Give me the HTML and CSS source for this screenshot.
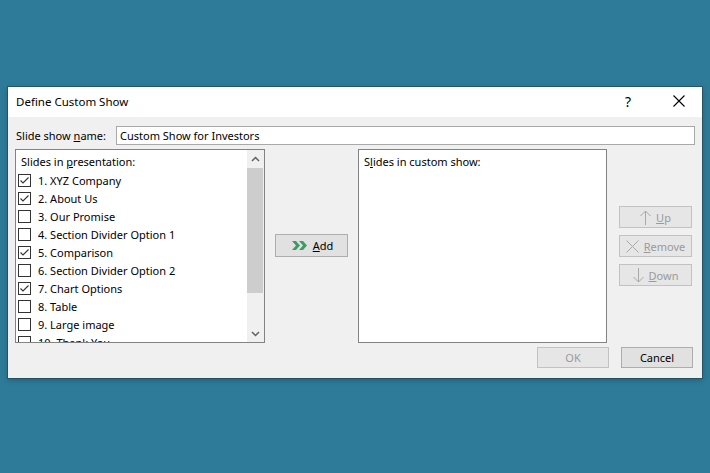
FILE: index.html
```html
<!DOCTYPE html>
<html>
<head>
<meta charset="utf-8">
<link rel="stylesheet" href="styles.css">
</head>
<body>
<div class="dialog">
  <div class="titlebar">
    <span class="title">Define Custom Show</span>
    <span class="help">?</span>
    <span class="close"><svg width="12" height="12" viewBox="0 0 12 12"><path d="M0.5 0.5 L11.5 11.5 M11.5 0.5 L0.5 11.5" stroke="#000" stroke-width="1.1" fill="none"/></svg></span>
  </div>
  <div class="body">
    <div class="name-row">
      <span class="name-label">Slide show <u>n</u>ame:</span>
      <div class="input">Custom Show for Investors</div>
    </div>
    <div class="main">
      <div class="listbox left">
        <div class="list">
          <div class="list-head">Slides in <u>p</u>resentation:</div>
          <div class="item"><span class="cb checked"><svg width="13" height="13" viewBox="0 0 13 13"><path d="M2.5 6.5 L5 9 L10.5 3.5" stroke="#333" stroke-width="1.1" fill="none"/></svg></span>1. XYZ Company</div>
          <div class="item"><span class="cb checked"><svg width="13" height="13" viewBox="0 0 13 13"><path d="M2.5 6.5 L5 9 L10.5 3.5" stroke="#333" stroke-width="1.1" fill="none"/></svg></span>2. About Us</div>
          <div class="item"><span class="cb"></span>3. Our Promise</div>
          <div class="item"><span class="cb"></span>4. Section Divider Option 1</div>
          <div class="item"><span class="cb checked"><svg width="13" height="13" viewBox="0 0 13 13"><path d="M2.5 6.5 L5 9 L10.5 3.5" stroke="#333" stroke-width="1.1" fill="none"/></svg></span>5. Comparison</div>
          <div class="item"><span class="cb"></span>6. Section Divider Option 2</div>
          <div class="item"><span class="cb checked"><svg width="13" height="13" viewBox="0 0 13 13"><path d="M2.5 6.5 L5 9 L10.5 3.5" stroke="#333" stroke-width="1.1" fill="none"/></svg></span>7. Chart Options</div>
          <div class="item"><span class="cb"></span>8. Table</div>
          <div class="item"><span class="cb"></span>9. Large image</div>
          <div class="item"><span class="cb"></span>10. Thank You</div>
        </div>
        <div class="scrollbar">
          <div class="sb-arrow"><svg width="9" height="6" viewBox="0 0 9 6"><path d="M1 5 L4.5 1.5 L8 5" stroke="#606060" stroke-width="1.5" fill="none"/></svg></div>
          <div class="sb-track"><div class="sb-thumb"></div></div>
          <div class="sb-arrow"><svg width="9" height="6" viewBox="0 0 9 6"><path d="M1 1 L4.5 4.5 L8 1" stroke="#606060" stroke-width="1.5" fill="none"/></svg></div>
        </div>
      </div>
      <div class="mid">
        <div class="btn add">
          <svg width="17" height="9" viewBox="0 0 17 9"><path d="M0 0 H4 L8 4.5 L4 9 H0 L4 4.5 Z" fill="#3f9b63"/><path d="M7 0 H11 L15 4.5 L11 9 H7 L11 4.5 Z" fill="#3f9b63"/></svg>
          <span><u>A</u>dd</span>
        </div>
      </div>
      <div class="listbox right">
        <div class="list-head">S<u>l</u>ides in custom show:</div>
      </div>
      <div class="side">
        <div class="btn disabled">
          <svg width="11" height="15" viewBox="0 0 11 15"><path d="M5.5 1 V15 M0.5 6 L5.5 1 L10.5 6" stroke="#a8a8a8" stroke-width="1" fill="none"/></svg>
          <span><u>U</u>p</span>
        </div>
        <div class="btn disabled">
          <svg width="13" height="13" viewBox="0 0 13 13"><path d="M0.5 0.5 L12.5 12.5 M12.5 0.5 L0.5 12.5" stroke="#a8a8a8" stroke-width="1" fill="none"/></svg>
          <span><u>R</u>emove</span>
        </div>
        <div class="btn disabled">
          <svg width="11" height="15" viewBox="0 0 11 15"><path d="M5.5 0 V14 M0.5 9 L5.5 14 L10.5 9" stroke="#a8a8a8" stroke-width="1" fill="none"/></svg>
          <span><u>D</u>own</span>
        </div>
      </div>
    </div>
    <div class="bottom">
      <div class="btn disabled ok">OK</div>
      <div class="btn cancel">Cancel</div>
    </div>
  </div>
</div>
</body>
</html>
```

FILE: styles.css
```css
html, body {
  margin: 0;
  padding: 0;
}
body {
  background: #2d7b99;
  width: 710px;
  height: 473px;
  padding: 87px 8px 0 8px;
  box-sizing: border-box;
  font-family: "Noto Sans", "Open Sans", sans-serif;
  font-size: 11px;
  color: #000;
}
.dialog {
  width: 694px;
  height: 291px;
  background: #f0f0f0;
  box-shadow: 0 0 0 1px rgba(40, 60, 70, 0.55), 0 2px 6px rgba(0, 0, 0, 0.25);
  display: flex;
  flex-direction: column;
}
.titlebar {
  height: 30px;
  background: #fff;
  display: flex;
  align-items: center;
  padding-left: 8px;
}
.title {
  flex: 1;
  font-size: 11.5px;
  line-height: 16px;
  margin-top: -1px;
}
.help {
  font-size: 14px;
  width: 12px;
  margin-right: 36px;
  margin-top: -2px;
}
.close {
  display: flex;
  margin-right: 17px;
  margin-top: -2px;
}
.body {
  flex: 1;
  padding: 9px 7px 10px 7px;
  display: flex;
  flex-direction: column;
}
.name-row {
  display: flex;
  height: 19px;
  align-items: center;
}
.name-label {
  width: 101px;
  padding-left: 1px;
  box-sizing: border-box;
}
.input {
  flex: 1;
  height: 19px;
  box-sizing: border-box;
  background: #fff;
  border: 1px solid #a9a9a9;
  padding-left: 3px;
  line-height: 17px;
}
.main {
  display: flex;
  margin-top: 4px;
  height: 194px;
}
.listbox {
  box-sizing: border-box;
  border: 1px solid #838383;
  background: #fff;
  overflow: hidden;
}
.listbox.left {
  width: 250px;
  display: flex;
}
.list {
  flex: 1;
  padding-top: 3px;
  overflow: hidden;
}
.list-head {
  height: 18px;
  line-height: 18px;
  padding-left: 5px;
}
.item {
  height: 18px;
  display: flex;
  align-items: center;
  padding-left: 2px;
}
.cb {
  width: 13px;
  height: 13px;
  box-sizing: border-box;
  border: 1px solid #333;
  margin-right: 7px;
  position: relative;
  flex: none;
}
.cb svg {
  position: absolute;
  left: -1px;
  top: -1px;
}
.scrollbar {
  width: 17px;
  background: #f0f0f0;
  display: flex;
  flex-direction: column;
}
.sb-arrow {
  height: 17px;
  display: flex;
  align-items: center;
  justify-content: center;
}
.sb-track {
  flex: 1;
  padding-bottom: 32px;
  display: flex;
  flex-direction: column;
}
.sb-thumb {
  flex: 1;
  margin: 1px 1px 0 0;
  background: #cdcdcd;
}
.mid {
  width: 93px;
  padding-top: 85px;
  padding-left: 10px;
  box-sizing: border-box;
}
.btn {
  box-sizing: border-box;
  width: 73px;
  background: #e1e1e1;
  border: 1px solid #adadad;
  display: flex;
  align-items: center;
  justify-content: center;
  gap: 5px;
}
.btn.add {
  height: 23px;
  gap: 4px;
}
.btn.add svg {
  margin-left: 2px;
}
.listbox.right {
  width: 249px;
  padding-top: 3px;
}
.listbox.right .list-head {
  padding-left: 5px;
}
.side {
  padding-top: 57px;
  padding-left: 12px;
  display: flex;
  flex-direction: column;
  gap: 7px;
}
.side .btn {
  height: 22px;
  width: 73px;
}
.btn.disabled {
  background: #e6e6e6;
  border-color: #c2c2c2;
  color: #9a9a9a;
}
.bottom {
  margin-top: 4px;
  display: flex;
  justify-content: flex-end;
  gap: 12px;
  padding-right: 2px;
}
.bottom .btn {
  width: 72px;
  height: 21px;
}
```
